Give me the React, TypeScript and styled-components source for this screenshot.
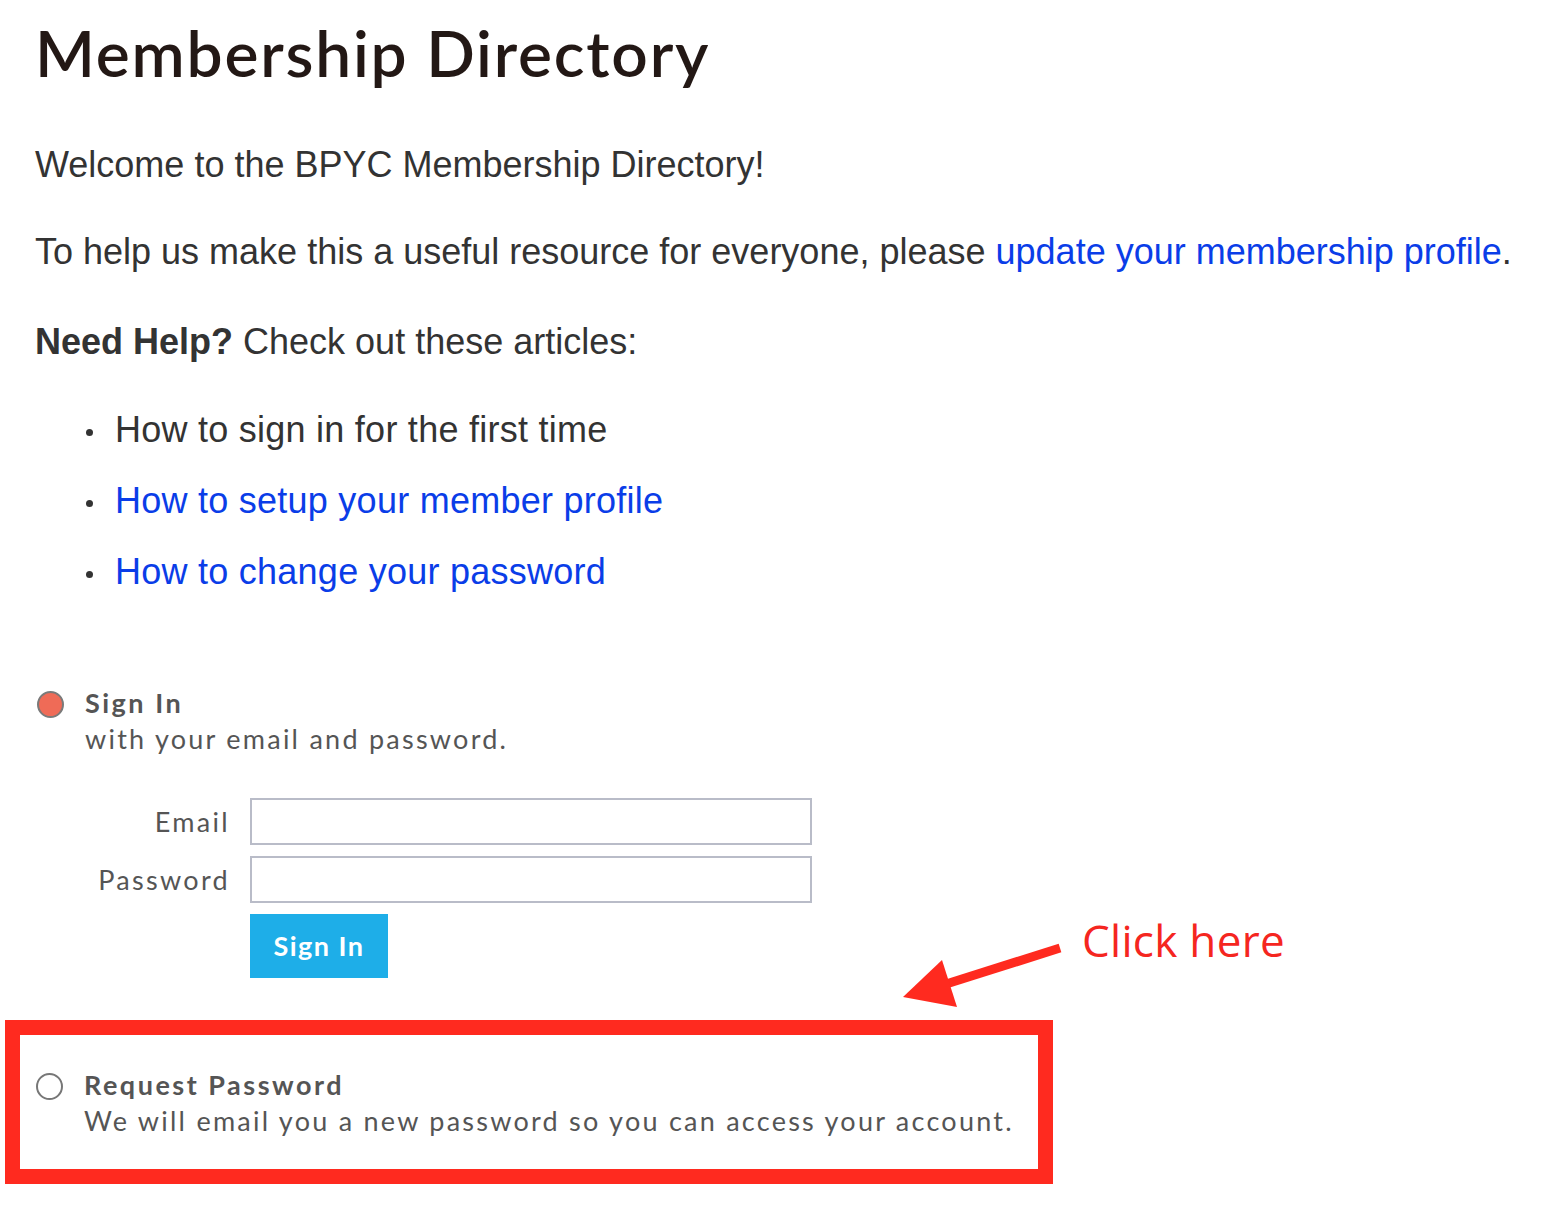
import React from "react";
import styled, { createGlobalStyle } from "styled-components";

const Global = createGlobalStyle`
  html, body { margin: 0; padding: 0; background: #fff; }
  body { font-family: "Liberation Sans", Arial, sans-serif; }
`;

const Page = styled.div`
  position: relative;
  width: 1546px;
  min-height: 1220px;
  box-sizing: border-box;
  padding: 15px 0 0 35px;
  overflow: hidden;
`;

const Title = styled.h1`
  margin: 0 0 46px;
  font-family: Lato, "Noto Sans", sans-serif;
  font-weight: 600;
  font-size: 64px;
  line-height: 76.8px;
  color: #231815;
  letter-spacing: 1.8px;
`;

const Para = styled.p<{ $mb: number }>`
  margin: 0 0 ${(p) => p.$mb}px;
  font-size: 36px;
  line-height: 54px;
  color: #333;
`;

const Link = styled.a`
  color: #0a3de8;
  text-decoration: none;
`;

const Bullets = styled.ul`
  list-style: none;
  margin: 0 0 86px;
  padding: 0 0 0 51px;
`;

const Item = styled.li`
  position: relative;
  margin-bottom: 17px;
  font-size: 36px;
  line-height: 54px;
  color: #333;
  padding-left: 29px;
  letter-spacing: 0.25px;
  &:last-child { margin-bottom: 0; }
  &::before {
    content: "";
    position: absolute;
    left: 0;
    top: 26px;
    width: 7px;
    height: 7px;
    border-radius: 50%;
    background: #333;
  }
`;

const Option = styled.div<{ $indent: number }>`
  display: flex;
  align-items: flex-start;
  gap: 21px;
  padding-left: ${(p) => p.$indent}px;
  font-family: Lato, "Noto Sans", sans-serif;
  color: #555;
`;

const Radio = styled.span<{ $checked?: boolean }>`
  flex: none;
  box-sizing: border-box;
  width: 27px;
  height: 27px;
  margin-top: 6px;
  border-radius: 50%;
  border: 2px solid ${(p) => (p.$checked ? "#7a7a7a" : "#777")};
  background: ${(p) => (p.$checked ? "#ef6b57" : "#fff")};
`;

const OptionText = styled.div`
  display: flex;
  flex-direction: column;
`;

const OptionTitle = styled.div`
  font-weight: 700;
  font-size: 27px;
  line-height: 36px;
  letter-spacing: 2.5px;
`;

const OptionDesc = styled.div`
  font-size: 27px;
  line-height: 36px;
  letter-spacing: 2.25px;
`;

const Form = styled.form`
  display: grid;
  grid-template-columns: 193px 562px;
  column-gap: 22px;
  row-gap: 11px;
  align-items: center;
  margin: 41px 0 42px;
  font-family: Lato, "Noto Sans", sans-serif;
`;

const Label = styled.label`
  text-align: right;
  font-size: 27px;
  color: #555;
  letter-spacing: 2.3px;
  margin-right: -2px;
`;

const Input = styled.input`
  box-sizing: border-box;
  width: 562px;
  height: 47px;
  border: 2px solid #b9bcc8;
  border-radius: 0;
  background: #fff;
  margin: 0;
  outline: none;
`;

const Button = styled.button`
  grid-column: 2;
  justify-self: start;
  width: 138px;
  height: 64px;
  border: 0;
  border-radius: 0;
  background: #1eaee8;
  color: #fff;
  font-family: Lato, "Noto Sans", sans-serif;
  font-weight: 700;
  font-size: 27px;
  letter-spacing: 1.5px;
  padding: 0;
`;

const Highlight = styled.div`
  box-sizing: border-box;
  width: 1048px;
  margin-left: -30px;
  border: 15px solid #ff2a1f;
  padding: 32px 0 30px 0;
`;

const Annotation = styled.div`
  position: absolute;
  left: 895px;
  top: 910px;
  display: flex;
  align-items: flex-start;
`;

const ArrowSvg = styled.svg`
  flex: none;
  margin-top: 28px;
`;

const ClickText = styled.span`
  font-family: "Open Sans", "Noto Sans", sans-serif;
  font-size: 44px;
  line-height: 60px;
  color: #f5261f;
  margin-left: 17px;
  letter-spacing: 0.3px;
`;

export default function App() {
  return (
    <>
      <Global />
      <Page>
        <Title>Membership Directory</Title>
        <Para $mb={33}>Welcome to the BPYC Membership Directory!</Para>
        <Para $mb={36}>
          To help us make this a useful resource for everyone, please{" "}
          <Link href="#">update your membership profile</Link>.
        </Para>
        <Para $mb={34}>
          <b>Need Help?</b> Check out these articles:
        </Para>
        <Bullets>
          <Item>How to sign in for the first time</Item>
          <Item>
            <Link href="#">How to setup your member profile</Link>
          </Item>
          <Item>
            <Link href="#">How to change your password</Link>
          </Item>
        </Bullets>

        <Option $indent={2}>
          <Radio $checked />
          <OptionText>
            <OptionTitle>Sign In</OptionTitle>
            <OptionDesc>with your email and password.</OptionDesc>
          </OptionText>
        </Option>

        <Form onSubmit={(e) => e.preventDefault()}>
          <Label>Email</Label>
          <Input type="text" />
          <Label>Password</Label>
          <Input type="password" />
          <Button type="submit">Sign In</Button>
        </Form>

        <Highlight>
          <Option $indent={16}>
            <Radio />
            <OptionText>
              <OptionTitle>Request Password</OptionTitle>
              <OptionDesc>We will email you a new password so you can access your account.</OptionDesc>
            </OptionText>
          </Option>
        </Highlight>

        <Annotation>
          <ArrowSvg width="170" height="75" viewBox="0 0 170 75">
            <line x1="165" y1="10" x2="48" y2="47" stroke="#ff2a1f" strokeWidth="9" />
            <polygon points="8,59 47,22 62,69" fill="#ff2a1f" />
          </ArrowSvg>
          <ClickText>Click here</ClickText>
        </Annotation>
      </Page>
    </>
  );
}
